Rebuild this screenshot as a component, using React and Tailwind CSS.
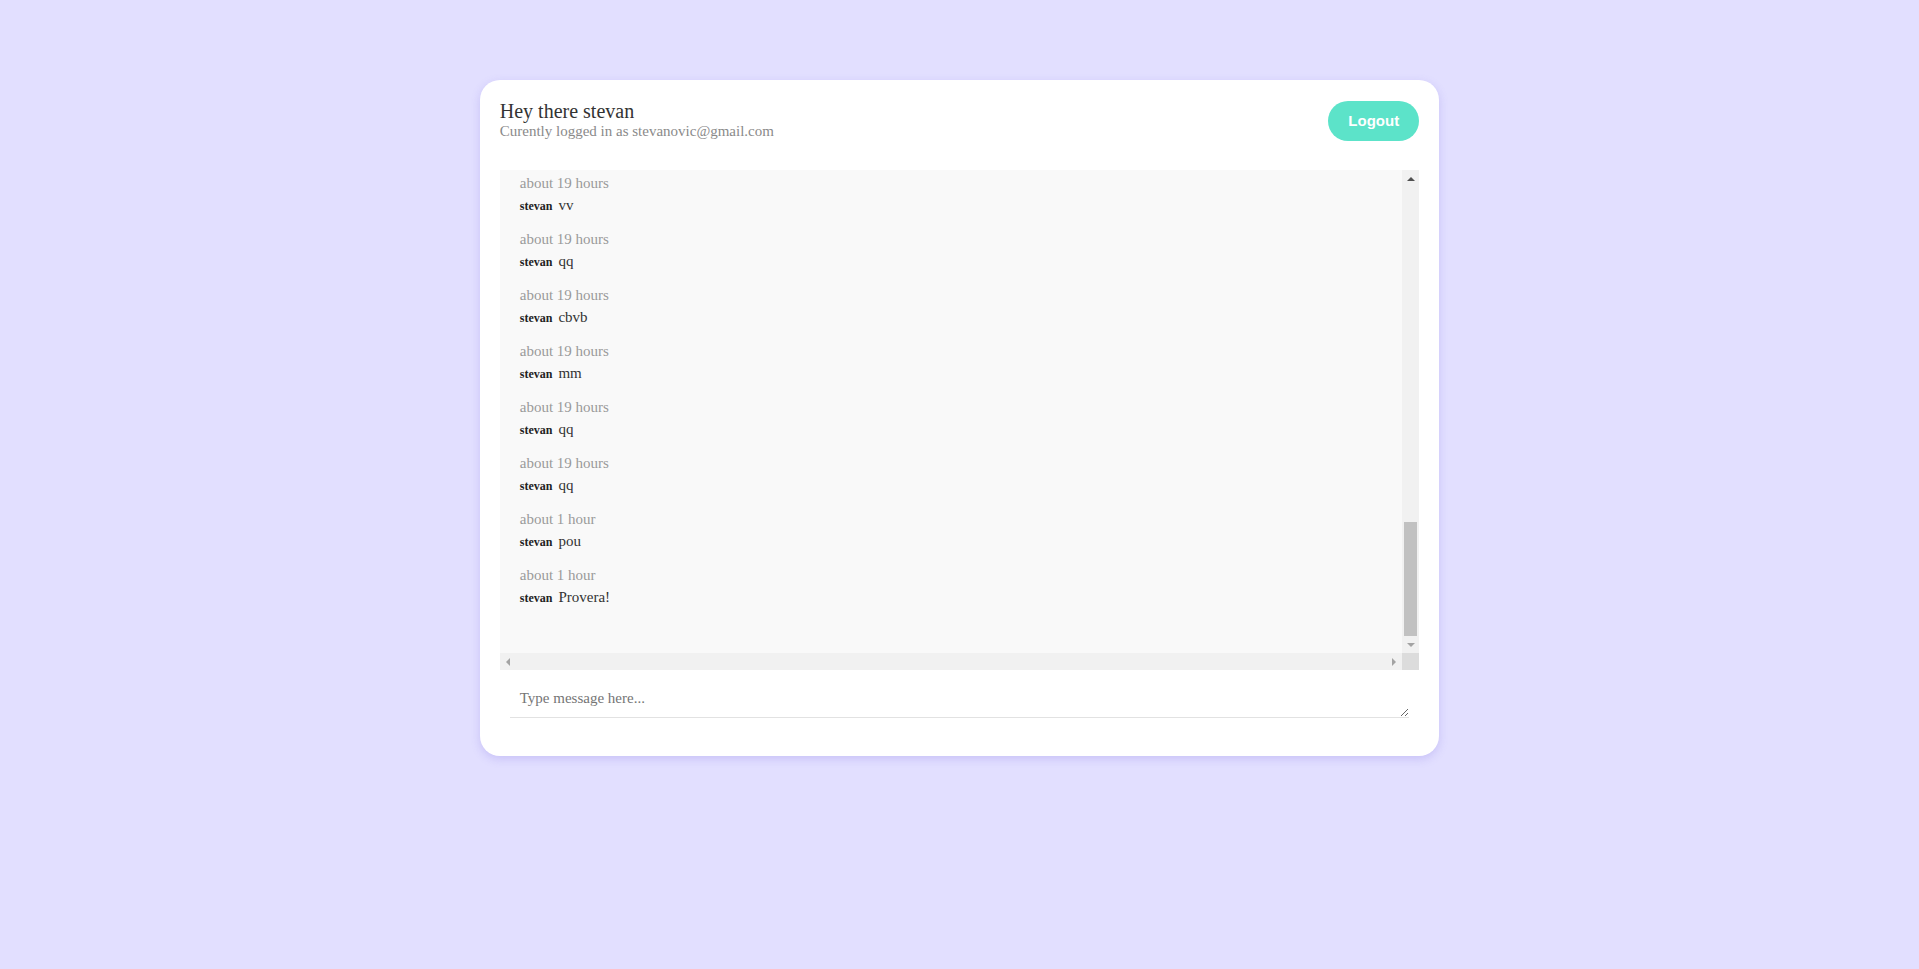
import { useState } from 'react';

const messages = [
    { time: 'about 20 hours', name: 'stevan', text: 'hello' },
    { time: 'about 20 hours', name: 'stevan', text: 'test' },
    { time: 'about 20 hours', name: 'stevan', text: 'aa' },
    { time: 'about 20 hours', name: 'stevan', text: 'ss' },
    { time: 'about 19 hours', name: 'stevan', text: 'dd' },
    { time: 'about 19 hours', name: 'stevan', text: 'ff' },
    { time: 'about 19 hours', name: 'stevan', text: 'gg' },
    { time: 'about 19 hours', name: 'stevan', text: 'hh' },
    { time: 'about 19 hours', name: 'stevan', text: 'vv' },
    { time: 'about 19 hours', name: 'stevan', text: 'qq' },
    { time: 'about 19 hours', name: 'stevan', text: 'cbvb' },
    { time: 'about 19 hours', name: 'stevan', text: 'mm' },
    { time: 'about 19 hours', name: 'stevan', text: 'qq' },
    { time: 'about 19 hours', name: 'stevan', text: 'qq' },
    { time: 'about 1 hour', name: 'stevan', text: 'pou' },
    { time: 'about 1 hour', name: 'stevan', text: 'Provera!' },
];

const Arrow = ({ dir, dark }) => {
    const color = dark ? '#505050' : '#a3a3a3';
    const points = {
        up: '0,4 4,0 8,4',
        down: '0,0 8,0 4,4',
        left: '4,0 4,8 0,4',
        right: '0,0 0,8 4,4',
    }[dir];
    const vertical = dir === 'up' || dir === 'down';
    return (
        <svg width={vertical ? 8 : 4} height={vertical ? 4 : 8} viewBox={vertical ? '0 0 8 4' : '0 0 4 8'}>
            <polygon points={points} fill={color} />
        </svg>
    );
};

const App = () => {
    const [text, setText] = useState('');

    return (
        <div className="min-h-screen bg-[#e2dfff] pt-[80px] font-['Liberation_Serif',serif]">
            <div className="mx-auto w-1/2 h-[676px] bg-white rounded-[20px] shadow-[0_3px_10px_rgba(110,90,220,0.22)] px-[20px] pt-[20px]">
                <div className="flex justify-between items-start">
                    <div>
                        <h1 className="text-[20px] leading-[23px] text-[#333]">Hey there stevan</h1>
                        <p className="text-[15px] leading-[17px] text-[#8a8a8a]">Curently logged in as stevanovic@gmail.com</p>
                    </div>
                    <button className="mt-[1px] h-[40px] w-[91px] rounded-full bg-[#5ce3c9] text-white font-bold text-[15px] font-['Liberation_Sans',sans-serif]">
                        Logout
                    </button>
                </div>

                <div className="mt-[29px] h-[500px] grid grid-cols-[1fr_17px] grid-rows-[1fr_17px] bg-[#f9f9f9]">
                    <div className="overflow-hidden flex flex-col justify-end px-[20px] pb-[47px]">
                        {messages.map((m, i) => (
                            <div key={i} className="mt-[16px] shrink-0">
                                <div className="h-[18px] text-[15px] leading-[18px] text-[#9a9a9a]">{m.time}</div>
                                <div className="mt-[4px] h-[18px] flex items-baseline leading-[18px]">
                                    <span className="text-[12px] font-bold text-[#222] mr-[6px]">{m.name}</span>
                                    <span className="text-[15px] text-[#333]">{m.text}</span>
                                </div>
                            </div>
                        ))}
                    </div>

                    <div className="bg-[#f1f1f1] flex flex-col items-center">
                        <div className="h-[17px] w-full flex items-center justify-center"><Arrow dir="up" dark /></div>
                        <div className="flex-1 w-full flex flex-col justify-end px-[2px]">
                            <div className="h-[114px] bg-[#c1c1c1]"></div>
                        </div>
                        <div className="h-[17px] w-full flex items-center justify-center"><Arrow dir="down" /></div>
                    </div>

                    <div className="bg-[#f1f1f1] flex items-center justify-between">
                        <div className="w-[17px] h-[17px] flex items-center justify-center"><Arrow dir="left" /></div>
                        <div className="w-[17px] h-[17px] flex items-center justify-center"><Arrow dir="right" /></div>
                    </div>
                    <div className="bg-[#dcdcdc]"></div>
                </div>

                <div className="px-[10px] mt-[10px]">
                    <textarea
                        rows="1"
                        value={text}
                        onChange={(e) => setText(e.target.value)}
                        placeholder="Type message here..."
                        className="block w-full h-[38px] p-[10px] text-[15px] leading-[17px] text-[#333] placeholder:text-[#757575] border-0 border-b border-[#e2e2e2] outline-none bg-white font-['Liberation_Serif',serif]"
                    ></textarea>
                </div>
            </div>
        </div>
    );
};

export default App;
